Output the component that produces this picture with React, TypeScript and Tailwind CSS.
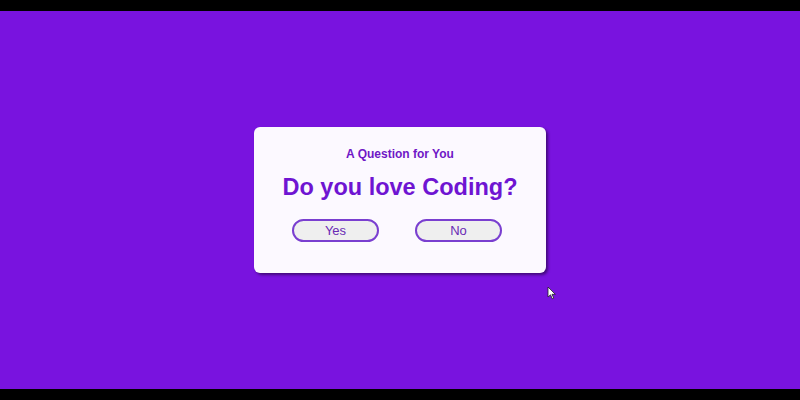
export default function App() {
  return (
    <div className="w-[800px] h-[400px] flex flex-col bg-black" style={{ fontFamily: '"Liberation Sans", Arial, sans-serif' }}>
      <div className="h-[11px] bg-black" />
      <div className="relative flex-1 bg-[#7913df] flex items-center justify-center">
        <div className="w-[292px] h-[146px] bg-[#fcf9ff] rounded-[6px] shadow-[2px_2px_3px_rgba(0,0,0,0.45)] flex flex-col items-center pt-[19px]">
          <div className="text-[12px] font-bold text-[#6f17c6] leading-[16px]">A Question for You</div>
          <div className="mt-[11px] text-[23.5px] font-bold text-[#6f14d2] leading-[28px]">Do you love Coding?</div>
          <div className="mt-[18px] mr-[6px] flex gap-[36px]">
            <button className="w-[87px] h-[23px] rounded-full border-2 border-[#7a3fd0] bg-[#efefef] text-[13px] text-[#6a2bb5] leading-none">Yes</button>
            <button className="w-[87px] h-[23px] rounded-full border-2 border-[#7a3fd0] bg-[#efefef] text-[13px] text-[#6a2bb5] leading-none">No</button>
          </div>
        </div>
        <svg className="absolute left-[547px] top-[275px]" width="10" height="14" viewBox="0 0 10 14">
          <path d="M1 1 L1 11 L3.5 8.8 L5.3 12.8 L6.8 12.1 L5 8.3 L8.3 8.3 Z" fill="#fff" stroke="#222" strokeWidth="0.8" />
        </svg>
      </div>
      <div className="h-[11px] bg-black" />
    </div>
  );
}
